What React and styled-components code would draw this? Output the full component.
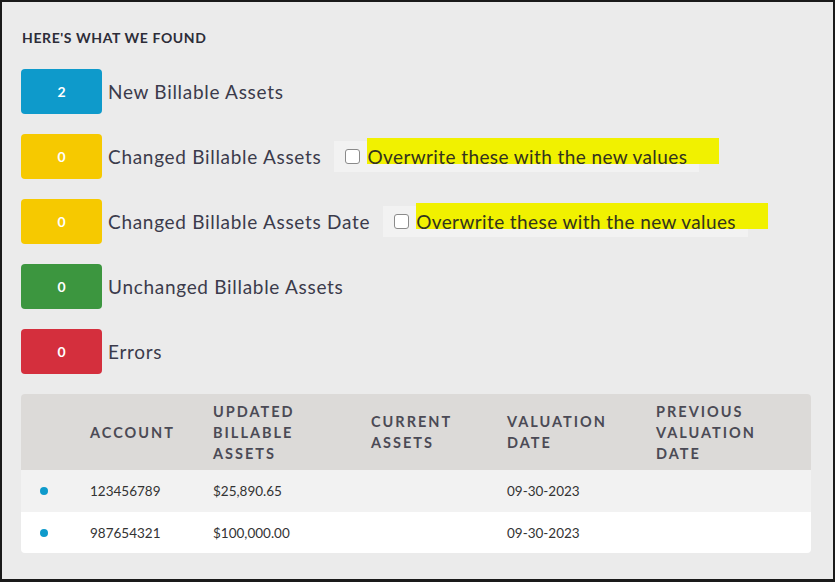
import React from "react";
import styled, { createGlobalStyle } from "styled-components";

const Global = createGlobalStyle`
  html, body { margin: 0; padding: 0; background: #ebebeb; }
  body { font-family: Lato, "Open Sans", sans-serif; }
`;

const Frame = styled.div`
  box-sizing: border-box;
  width: 835px;
  height: 582px;
  border: 2px solid #1a1a1a;
  border-bottom-width: 3px;
  background: #ebebeb;
  padding: 27px 22px 0 19px;
  display: flex;
  flex-direction: column;
`;

const Title = styled.h2`
  margin: 0 0 0 1px;
  font-size: 14px;
  line-height: 18px;
  font-weight: 700;
  letter-spacing: 0.6px;
  color: #2d2d38;
  text-transform: uppercase;
`;

const Summary = styled.div`
  margin-top: 22px;
  display: flex;
  flex-direction: column;
  gap: 20px;
`;

const Row = styled.div`
  display: flex;
  align-items: center;
  height: 45px;
`;

const Badge = styled.div`
  width: 81px;
  height: 45px;
  border-radius: 4px;
  background: ${(p) => p.$color};
  color: #fff;
  font-weight: 700;
  font-size: 14px;
  display: flex;
  align-items: center;
  justify-content: center;
  flex-shrink: 0;
`;

const Label = styled.span`
  margin-left: 6px;
  font-size: 19px;
  letter-spacing: 0.7px;
  color: #3b3b4b;
`;

const OptionBox = styled.label`
  margin-left: 13px;
  height: 31px;
  display: flex;
  align-items: center;
  background: #f2f2f2;
  padding: 0 12px 0 11px;
  font-size: 19px;
  letter-spacing: 0.4px;
  color: #33331f;
`;

const Check = styled.span`
  box-sizing: border-box;
  width: 15px;
  height: 15px;
  border: 1.5px solid #8a8a8a;
  border-radius: 3px;
  background: #fff;
  flex-shrink: 0;
  margin-right: 7px;
`;

const Highlight = styled.span`
  position: relative;
  z-index: 0;
  line-height: 22px;
  &::before {
    content: "";
    position: absolute;
    z-index: -1;
    left: 0;
    right: -32px;
    top: -8px;
    bottom: 4px;
    background: #f1f100;
  }
`;

const Table = styled.div`
  margin-top: 20px;
  width: 790px;
  border-radius: 4px;
  overflow: hidden;
`;

const cols = "69px 123px 158px 136px 149px 155px";

const HeadRow = styled.div`
  display: grid;
  grid-template-columns: ${cols};
  align-items: center;
  height: 76px;
  background: #dcdad8;
`;

const HeadCell = styled.div`
  font-size: 14.5px;
  line-height: 21px;
  font-weight: 700;
  letter-spacing: 2px;
  color: #4b4a55;
  text-transform: uppercase;
`;

const BodyRow = styled.div`
  display: grid;
  grid-template-columns: ${cols};
  align-items: center;
  height: ${(p) => p.$h}px;
  background: ${(p) => p.$bg};
`;

const Cell = styled.div`
  font-size: 13.5px;
  color: #333;
`;

const Dot = styled.span`
  display: block;
  width: 8px;
  height: 8px;
  border-radius: 50%;
  background: #0e9acb;
  margin-left: 19px;
`;

const summary = [
  { n: 2, color: "#0e9acb", label: "New Billable Assets" },
  { n: 0, color: "#f6c900", label: "Changed Billable Assets", option: true },
  { n: 0, color: "#f6c900", label: "Changed Billable Assets Date", option: true },
  { n: 0, color: "#3c963f", label: "Unchanged Billable Assets" },
  { n: 0, color: "#d42f3d", label: "Errors" },
];

const headers = [
  [],
  ["Account"],
  ["Updated", "Billable", "Assets"],
  ["Current", "Assets"],
  ["Valuation", "Date"],
  ["Previous", "Valuation", "Date"],
];

const rows = [
  { account: "123456789", updated: "$25,890.65", current: "", date: "09-30-2023", prev: "", bg: "#f2f2f2", h: 42 },
  { account: "987654321", updated: "$100,000.00", current: "", date: "09-30-2023", prev: "", bg: "#ffffff", h: 41 },
];

export default function App() {
  return (
    <>
      <Global />
      <Frame>
        <Title>Here's what we found</Title>
        <Summary>
          {summary.map((s, i) => (
            <Row key={i}>
              <Badge $color={s.color}>{s.n}</Badge>
              <Label>{s.label}</Label>
              {s.option && (
                <OptionBox>
                  <Check />
                  <Highlight>Overwrite these with the new values</Highlight>
                </OptionBox>
              )}
            </Row>
          ))}
        </Summary>
        <Table>
          <HeadRow>
            {headers.map((h, i) => (
              <HeadCell key={i}>
                {h.map((line, j) => (
                  <React.Fragment key={j}>
                    {j > 0 && <br />}
                    {line}
                  </React.Fragment>
                ))}
              </HeadCell>
            ))}
          </HeadRow>
          {rows.map((r, i) => (
            <BodyRow key={i} $bg={r.bg} $h={r.h}>
              <Cell><Dot /></Cell>
              <Cell>{r.account}</Cell>
              <Cell>{r.updated}</Cell>
              <Cell>{r.current}</Cell>
              <Cell>{r.date}</Cell>
              <Cell>{r.prev}</Cell>
            </BodyRow>
          ))}
        </Table>
      </Frame>
    </>
  );
}
